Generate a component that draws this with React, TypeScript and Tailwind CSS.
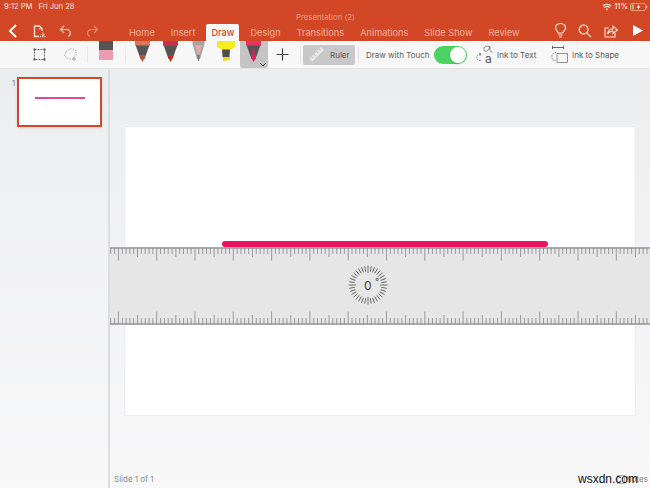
import React from "react";

function Ticks({ flip }: { flip?: boolean }) {
  const ticks = [];
  for (let i = 0; i < 141; i++) {
    const x = 0.74 + i * 3.83;
    const h = (i + 8) % 10 === 0 ? 12.5 : (i + 3) % 10 === 0 ? 9 : 6;
    ticks.push(
      <line key={i} x1={x} x2={x} y1={flip ? 15 - h : 1} y2={flip ? 15 : h + 1} stroke="#808080" strokeWidth="0.75" />
    );
  }
  return (
    <svg width="540" height="16" className="block">
      <line x1="0" x2="540" y1={flip ? 15 : 1} y2={flip ? 15 : 1} stroke="#707070" strokeWidth="1" />
      {ticks}
    </svg>
  );
}

function Dial() {
  const lines = [];
  for (let i = 0; i < 36; i++) {
    const major = i % 9 === 0;
    lines.push(
      <line key={i} x1="20" y1={major ? 0.5 : 1} x2="20" y2={major ? 8 : 6.5} stroke="#5a5a5a" strokeWidth="0.85" transform={`rotate(${i * 10} 20 20)`} />
    );
  }
  return (
    <svg width="40" height="40" viewBox="0 0 40 40" className="block">
      {lines}
    </svg>
  );
}

function Pen({ band, tip, light }: { band: string; tip: string; light?: boolean }) {
  return (
    <svg width="15" height="21" viewBox="0 0 15 21" className="block">
      <path d="M0.5 0H14.5V4L9.5 18H5.5L0.5 4Z" fill="#555" />
      <path d="M0 0H15V4.5H0Z" fill={band} />
      <path d="M4.6 14H10.4L8 20.5H7Z" fill={tip} />
      {light ? <path d="M6.3 9H8.7L8.5 15H6.5Z" fill={tip} /> : null}
    </svg>
  );
}

function Tab({ label, active }: { label: string; active?: boolean }) {
  return (
    <div
      className={
        active
          ? "h-[17px] px-[5px] -mx-[5px] bg-[#f7f7f7] rounded-t-[2px] text-[#d24726] font-medium flex items-center"
          : "h-[17px] text-[#f3b29e] flex items-center"
      }
    >
      {label}
    </div>
  );
}

export default function App() {
  return (
    <div
      className="relative w-[650px] h-[488px] overflow-hidden flex flex-col bg-[#f3f3f5]"
      style={{ fontFamily: 'Inter, "Liberation Sans", sans-serif' }}
    >
      {/* Header */}
      <div className="h-[41px] shrink-0 bg-[#d24726] relative">
        <div className="h-[13px] flex items-center justify-between pl-[4px] pr-[2px] text-[7.6px] text-[#f9e0d8]">
          <div className="flex gap-[6px] pt-[1px]">
            <span>9:12 PM</span>
            <span>Fri Jun 28</span>
          </div>
          <div className="flex items-center gap-[2px] pt-[1px]">
            <svg width="10" height="8" viewBox="0 0 10 8" fill="none" stroke="#fff" strokeWidth="1.1">
              <path d="M0.8 3A6 6 0 0 1 9.2 3M2.3 4.6A3.8 3.8 0 0 1 7.7 4.6" />
              <path d="M3.8 6A1.8 1.8 0 0 1 6.2 6L5 7.4Z" fill="#fff" stroke="none" />
            </svg>
            <span className="font-medium">11%</span>
            <svg width="18" height="8" viewBox="0 0 18 8" fill="none">
              <rect x="0.5" y="0.5" width="15" height="7" rx="1.5" stroke="#f0b09c" strokeWidth="0.8" />
              <rect x="1.5" y="1.5" width="2.5" height="5" fill="#a8c05a" />
              <path d="M9 1L6.5 4.4H8.4L7.6 7L10.4 3.4H8.6Z" fill="#fff" />
              <rect x="16.2" y="2.6" width="1.2" height="2.8" fill="#f0b09c" />
            </svg>
          </div>
        </div>
        <div className="absolute top-[12px] left-[296px] text-[7.8px] leading-[10px] text-[#ef9f86]">Presentation (2)</div>
        <div className="h-[28px] flex items-end pl-[6px]">
          <div className="flex items-center self-start pt-[11px]">
            <svg width="11" height="14" viewBox="0 0 11 14" fill="none" stroke="#fff" strokeWidth="2" className="block">
              <path d="M10 1L4 7L10 13" />
            </svg>
            <svg width="14" height="13" viewBox="0 0 14 13" fill="none" stroke="#fbe3da" strokeWidth="1.3" className="block ml-[16px]">
              <path d="M1.5 1H6.5L9 3.5V6M1.5 1V11.5H6" />
              <path d="M6 3.8H9" strokeWidth="0.9" />
              <path d="M7 11.5H13" strokeDasharray="1.2 1" />
              <path d="M10 7.5V10.5M8.7 9.2L10 10.5L11.3 9.2" strokeWidth="0.9" />
            </svg>
            <svg width="13" height="12" viewBox="0 0 13 12" fill="none" stroke="#f9d2c4" strokeWidth="1.1" className="block ml-[12px]">
              <path d="M5 1L1.5 4.5L5 8" />
              <path d="M1.5 4.5H8A3.5 3.5 0 0 1 9 11.3" />
            </svg>
            <svg width="13" height="12" viewBox="0 0 13 12" fill="none" stroke="#ea8a6d" strokeWidth="1.1" className="block ml-[14px]">
              <path d="M8 1L11.5 4.5L8 8" />
              <path d="M11.5 4.5H5A3.5 3.5 0 0 0 4 11.3" />
            </svg>
          </div>
          <div className="flex items-end gap-[16px] text-[9.2px] ml-[30px]">
            <Tab label="Home" />
            <Tab label="Insert" />
            <Tab label="Draw" active />
            <Tab label="Design" />
            <Tab label="Transitions" />
            <Tab label="Animations" />
            <Tab label="Slide Show" />
            <Tab label="Review" />
          </div>
          <div className="ml-auto flex items-center self-start pt-[10px] pr-[6px]">
            <svg width="13" height="15" viewBox="0 0 13 15" fill="none" stroke="#fbe3da" strokeWidth="1.1" className="block">
              <path d="M4 10C4 8 1.5 7.5 1.5 4.8A5 4.3 0 0 1 11.5 4.8C11.5 7.5 9 8 9 10Z" />
              <path d="M4.5 12H8.5M5.2 14H7.8" />
            </svg>
            <svg width="14" height="14" viewBox="0 0 14 14" fill="none" stroke="#fbe3da" strokeWidth="1.2" className="block ml-[11px]">
              <circle cx="5.6" cy="5.6" r="4.4" />
              <path d="M8.8 8.8L13 13" />
            </svg>
            <svg width="14" height="14" viewBox="0 0 14 14" fill="none" stroke="#fbe3da" strokeWidth="1.1" className="block ml-[12px]">
              <path d="M5 4H1V13H11V9" />
              <path d="M3.5 10C4 6.8 6 5 9 5V2.2L13.4 6L9 9.5V7C7 7 5 8 3.5 10Z" />
            </svg>
            <svg width="12" height="13" viewBox="0 0 12 13" className="block ml-[14px]">
              <path d="M1 1L11 6.5L1 12Z" fill="#fff" />
            </svg>
          </div>
        </div>
      </div>

      {/* Toolbar */}
      <div className="h-[28px] shrink-0 bg-[#f7f7f7] border-b border-[#e4e4e4] flex items-center text-[8px] text-[#5a5a5a]">
        <div className="w-[33px] shrink-0" />
        <svg width="13" height="13" viewBox="0 0 13 13" fill="none" stroke="#555" strokeWidth="0.9" className="shrink-0">
          <rect x="1.5" y="1.5" width="10" height="10" strokeDasharray="2 1" />
          <rect x="0.5" y="0.5" width="2" height="2" fill="#555" stroke="none" />
          <rect x="10.5" y="0.5" width="2" height="2" fill="#555" stroke="none" />
          <rect x="0.5" y="10.5" width="2" height="2" fill="#555" stroke="none" />
          <rect x="10.5" y="10.5" width="2" height="2" fill="#555" stroke="none" />
        </svg>
        <svg width="15" height="15" viewBox="0 0 15 15" fill="none" stroke="#999" strokeWidth="0.8" className="shrink-0 ml-[17px]">
          <path d="M3 4.5L8 1.5L12.5 3L13 7.5L9.5 12H5L1.5 9Z" strokeDasharray="1.5 1" />
          <path d="M11 10V14M9 12H13" />
        </svg>
        <div className="w-px h-[16px] bg-[#e8e8e8] ml-[9px] shrink-0" />
        <div className="ml-[11px] self-start flex flex-col w-[14px] h-[19px] shrink-0">
          <div className="h-[9px] bg-[#555]" />
          <div className="h-[10px] bg-[#ea9cb0] rounded-b-[1px]" />
        </div>
        <div className="w-px h-[16px] bg-[#e8e8e8] ml-[12px] shrink-0" />
        <div className="ml-[9px] self-start flex shrink-0">
          <Pen band="#d9775f" tip="#cf4a2c" />
          <div className="ml-[13px]">
            <Pen band="#c9304a" tip="#cc2a16" />
          </div>
          <svg width="13" height="21" viewBox="0 0 13 21" className="block ml-[14px]">
            <path d="M0.5 0H12.5V3L8 18H5L0.5 3Z" fill="#a4a4a4" />
            <path d="M3 4H10L7.6 13H5.4Z" fill="#eda6a6" />
            <path d="M5.2 14H7.8L6.9 20H6.1Z" fill="#777" />
          </svg>
        </div>
        <svg width="18" height="20" viewBox="0 0 18 20" className="block self-start ml-[12px] shrink-0">
          <path d="M0 0H18V6L13 9H5L0 6Z" fill="#f6ec1f" />
          <path d="M5 8.5H13L12.5 16H5.5Z" fill="#4e4e4e" />
          <path d="M6 16H13V19L6 20Z" fill="#f0d91c" />
        </svg>
        <div className="self-start ml-[5px] w-[28px] h-[27px] bg-[#c4c4c4] rounded-b-[2px] relative flex justify-center pr-[1px] shrink-0">
          <Pen band="#e8336a" tip="#ec1a5c" light />
          <svg width="8" height="5" viewBox="0 0 8 5" fill="none" stroke="#333" strokeWidth="1" className="absolute right-[1px] bottom-[1px]">
            <path d="M1 1L4 4L7 1" />
          </svg>
        </div>
        <svg width="13" height="13" viewBox="0 0 13 13" stroke="#444" strokeWidth="1.2" className="ml-[8px] shrink-0">
          <path d="M6.5 0.5V12.5M0.5 6.5H12.5" />
        </svg>
        <div className="w-px h-[16px] bg-[#e2e2e2] ml-[11px] shrink-0" />
        <div className="ml-[2px] w-[52px] h-[20px] shrink-0 rounded-[2px] bg-[#c8c8c8] flex items-center text-[#555] pl-[5px]">
          <svg width="17" height="17" viewBox="0 0 17 17" fill="none" className="shrink-0">
            <path d="M1 13L13 1L16 4L4 16Z" fill="#e4e4e4" />
            <path d="M3.5 10.5L5 12M6 8L7.5 9.5M8.5 5.5L10 7M11 3L12.5 4.5" stroke="#b4b4b4" strokeWidth="0.7" />
          </svg>
          <span className="ml-[5px]">Ruler</span>
        </div>
        <div className="w-px h-[16px] bg-[#e2e2e2] ml-[3px] shrink-0" />
        <span className="ml-[7px] w-[64px] shrink-0 whitespace-nowrap">Draw with Touch</span>
        <div className="ml-[4px] w-[33px] h-[18px] shrink-0 rounded-full bg-[#4cd263] relative">
          <div className="absolute right-[1px] top-[1px] w-[16px] h-[16px] rounded-full bg-white shadow-sm" />
        </div>
        <svg width="18" height="20" viewBox="0 0 18 20" fill="none" stroke="#666" strokeWidth="0.8" className="ml-[9px] shrink-0">
          <path d="M14 2.2C11.5 0 7.5 1.5 8 4.8C8.5 7.5 12.5 6.5 14 1.5C13.5 4 14 7.5 16.5 7" />
          <path d="M5 9C2 9 0.8 11 0.8 13C0.8 15 3 16 5 15.5" strokeDasharray="1.5 1" />
          <path d="M3.2 8L5 9.2L3.5 11" />
          <text x="9" y="18" fontSize="12" fill="#555" stroke="none" fontFamily="Inter, sans-serif">a</text>
        </svg>
        <span className="ml-[3px] w-[40px] shrink-0 whitespace-nowrap">Ink to Text</span>
        <svg width="17" height="20" viewBox="0 0 17 20" fill="none" stroke="#666" strokeWidth="0.8" className="ml-[14px] shrink-0">
          <path d="M1 2.5H13" strokeWidth="1" />
          <path d="M1.5 0.8V4.2M12.5 0.8V4.2" strokeWidth="1" />
          <rect x="6" y="8.5" width="10.5" height="9" strokeWidth="0.7" />
          <path d="M5 7.5C2.5 7.5 0.8 9.5 0.8 12C0.8 14.5 2.5 16 5 15.5" strokeDasharray="1.5 1" />
        </svg>
        <span className="ml-[4px] whitespace-nowrap">Ink to Shape</span>
      </div>

      {/* Body */}
      <div className="flex-1 flex min-h-0 bg-gradient-to-b from-[#ecedef] to-[#f8f8f9]">
        <div className="w-[110px] shrink-0 border-r-2 border-[#dcdcde] pt-[8px] flex items-start">
          <span className="text-[7.5px] text-[#777] w-[17px] pl-[12px] pt-[1px]">1</span>
          <div className="w-[85px] h-[50px] bg-white border-2 border-[#cf4a2c] flex justify-center shadow-sm pt-[18px]">
            <div className="w-[50px] h-[2px] bg-[#d84c92]" />
          </div>
        </div>
        <div className="flex-1 flex flex-col">
          <div className="flex-1 px-[14px] pt-[57px]">
            <div className="h-[290px] bg-white border border-[#ececec]" />
          </div>
          <div className="h-[18px] shrink-0 flex items-center justify-between pl-[4px] pr-[2px] text-[8px] text-[#8a8a8a]">
            <span>Slide 1 of 1</span>
            <span className="flex items-center gap-[1px]">
              <svg width="8" height="9" viewBox="0 0 8 9" fill="none" stroke="#999" strokeWidth="0.8">
                <rect x="0.5" y="0.5" width="7" height="8" />
              </svg>
              Notes
            </span>
          </div>
        </div>
      </div>

      {/* Ink stroke and ruler overlay */}
      <div className="absolute left-[222px] top-[241px] w-[326px] h-[6px] rounded-full bg-[#ea1261]" />
      <div className="absolute left-[110px] top-[247px] w-[540px] h-[78px] bg-[#e6e6e6] flex flex-col justify-between">
        <Ticks />
        <Ticks flip />
      </div>
      <div className="absolute left-[348px] top-[265px]">
        <Dial />
      </div>
      <div className="absolute left-[364px] top-[279px] text-[12px] leading-[14px] text-[#444]">0</div>
      <div className="absolute left-[375px] top-[277px] text-[9px] leading-[10px] text-[#444]">°</div>

      {/* Watermark */}
      <div className="absolute left-[578px] top-[472px] text-[12px] leading-[14px] text-[#111]" style={{ fontFamily: '"Liberation Sans", sans-serif' }}>
        wsxdn.com
      </div>
    </div>
  );
}
